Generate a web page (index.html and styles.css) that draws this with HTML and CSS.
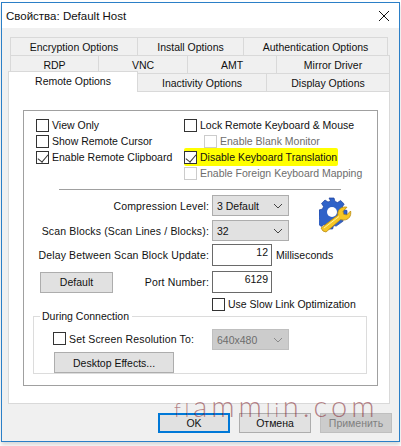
FILE: index.html
```html
<!DOCTYPE html>
<html lang="ru">

<head>
    <meta charset="UTF-8">
    <title>Свойства: Default Host</title>
    <link rel="stylesheet" href="styles.css">
</head>

<body>
    <div class="window">
        <div class="titlebar">
            <span>Свойства: Default Host</span>
            <svg class="close" width="12" height="12" viewBox="0 0 12 12">
                <path d="M1 1l10 10M11 1L1 11" stroke="#111" stroke-width="1" fill="none" />
            </svg>
        </div>

        <div class="content">
            <div class="tabrow row1">
                <div class="tab w128">Encryption Options</div>
                <div class="tab w106">Install Options</div>
                <div class="tab w144">Authentication Options</div>
            </div>
            <div class="tabrow row2">
                <div class="tab w88">RDP</div>
                <div class="tab w89">VNC</div>
                <div class="tab w88">AMT</div>
                <div class="tab w113">Mirror Driver</div>
            </div>
            <div class="tabrow row3">
                <div class="tab active">Remote Options</div>
                <div class="tab w129">Inactivity Options</div>
                <div class="tab w123">Display Options</div>
            </div>

            <div class="panel">
                <div class="main">
                    <div class="checks">
                        <div class="col left">
                            <label class="check"><i class="box"></i>View Only</label>
                            <label class="check"><i class="box"></i>Show Remote Cursor</label>
                            <label class="check"><i class="box on"></i>Enable Remote Clipboard</label>
                        </div>
                        <div class="col">
                            <label class="check"><i class="box"></i>Lock Remote Keyboard &amp; Mouse</label>
                            <label class="check off sub"><i class="box"></i>Enable Blank Monitor</label>
                            <label class="check marked"><i class="box on"></i>Disable Keyboard Translation</label>
                            <label class="check off"><i class="box"></i>Enable Foreign Keyboard Mapping</label>
                        </div>
                    </div>

                    <div class="sep"></div>

                    <div class="settings">
                        <div class="form">
                            <div class="line">
                                <span class="lbl">Compression Level:</span>
                                <div class="select">3 Default<svg class="chev" width="10" height="6" viewBox="0 0 10 6"><path d="M1 1l4 4 4-4" /></svg></div>
                            </div>
                            <div class="line gap4">
                                <span class="lbl">Scan Blocks (Scan Lines / Blocks):</span>
                                <div class="select">32<svg class="chev" width="10" height="6" viewBox="0 0 10 6"><path d="M1 1l4 4 4-4" /></svg></div>
                            </div>
                            <div class="line gap3">
                                <span class="lbl">Delay Between Scan Block Update:</span>
                                <div class="input">12</div>
                                <span class="unit">Milliseconds</span>
                            </div>
                            <div class="line gap5">
                                <div class="btn default">Default</div>
                                <span class="lbl">Port Number:</span>
                                <div class="input">6129</div>
                            </div>
                            <div class="line slow">
                                <label class="check"><i class="box"></i>Use Slow Link Optimization</label>
                            </div>
                        </div>

                        <svg class="gear" width="36" height="36" viewBox="0 0 36 36">
                            <path fill="#2f62c8" stroke="#1c3f9c" stroke-width=".7" d="M10 1h5l1 3.500 2.600 1 3-2 3.600 3.500-2 3 1 2.600 3.800.9v5l-3.800 1-1 2.600 1 2-7 5-2.600-.6-1 3.500h-5l-1-3.500-2.600-1-3 2-3.500-3.600 2-3-1-2.600L0 18v-5l3.500-1 1-2.600-2-3L6 3l3 2 2.600-1z" />
                            <circle cx="13" cy="15" r="5" fill="#fff" />
                            <path fill="#f6c625" stroke="#b98a10" stroke-width=".8" d="M4 34l-2-3 17-13c-1-4 2-8 7-8 1 0 2 .2 2 .2l-4 4 .6 3 3 .8 4-4c1 5-2 9-7 9-1 0-2 0-3-.4L7 35z" />
                            <path fill="none" stroke="#fff2a0" stroke-width="1" d="M5 31l15-11.500" />
                        </svg>
                    </div>

                    <fieldset class="during">
                        <legend>During Connection</legend>
                        <div class="line res-line">
                            <label class="check res"><i class="box"></i>Set Screen Resolution To:</label>
                            <div class="select dis">640x480<svg class="chev" width="10" height="6" viewBox="0 0 10 6"><path d="M1 1l4 4 4-4" /></svg></div>
                        </div>
                        <div class="btn effects">Desktop Effects...</div>
                    </fieldset>
                </div>
            </div>

            <div class="actions">
                <div class="btn act focus">OK</div>
                <div class="btn act">Отмена</div>
                <div class="btn act dis">Применить</div>
            </div>
        </div>

        <div class="watermark"><span class="short">fl</span>amm<span class="short">li</span>n.com</div>
    </div>
</body>

</html>
```

FILE: styles.css
```css
* {
    box-sizing: border-box;
}

body {
    margin: 0;
    height: 446px;
    overflow: hidden;
    background-color: #fff;
    font-family: "Liberation Sans", Arial, sans-serif;
    font-size: 10.5px;
    color: #111;
}

.window {
    position: relative;
    width: 399px;
    height: 440px;
    margin: 2px 0 0 1px;
    border: 1px solid #2b7fc7;
    background-color: #f0f0f0;
    box-shadow: 0 3px 4px #d8d8d8;
}

.titlebar {
    display: flex;
    justify-content: space-between;
    align-items: center;
    height: 25px;
    padding: 0 9px 0 4px;
    background-color: #fff;
    font-size: 11.5px;
}

.content {
    padding: 9px 8px 0 6px;
}

/* tabs */
.tabrow {
    display: flex;
    height: 18px;
    margin-left: 2px;
}

.row3 {
    margin-left: 0;
    align-items: flex-end;
    height: 18px;
}

.tab {
    display: flex;
    justify-content: center;
    align-items: center;
    height: 18px;
    border: 1px solid #d9d9d9;
    border-bottom: none;
    border-left: none;
    background-color: #f0f0f0;
    white-space: nowrap;
}

.tab:first-child {
    border-left: 1px solid #d9d9d9;
}

.w128 { width: 128px; }
.w106 { width: 106px; }
.w144 { width: 144px; }
.w88 { width: 89px; }
.w89 { width: 89px; }
.w113 { width: 113px; }
.w129 { width: 129px; }
.w123 { width: 123px; }

.tab.active {
    position: relative;
    z-index: 1;
    width: 130px;
    height: 21px;
    margin-bottom: -1px;
    padding-bottom: 3px;
    background-color: #fff;
}

.panel {
    width: 382px;
    height: 313px;
    padding: 18px 12px 0 14px;
    border: 1px solid #d9d9d9;
    background-color: #fff;
}

.main {
    width: 355px;
    height: 276px;
    padding: 6px 9px 0 9px;
    border: 1px solid #a0a0a0;
}

/* checkboxes */
.checks {
    display: flex;
    height: 66px;
    padding-left: 3px;
}

.col.left {
    flex: none;
    width: 148px;
}

.check {
    display: flex;
    align-items: center;
    height: 16px;
    white-space: nowrap;
}

.box {
    flex: none;
    display: block;
    position: relative;
    width: 13px;
    height: 13px;
    margin-right: 3px;
    border: 1px solid #333;
    background-color: #fff;
}

.box.on::after {
    content: "";
    position: absolute;
    left: 3px;
    top: 0;
    width: 5px;
    height: 9px;
    border: solid #333;
    border-width: 0 1px 1px 0;
    transform: rotate(40deg);
}

.check.off {
    color: #6d6d6d;
}

.check.off .box {
    border-color: #ccc;
}

.check.sub {
    margin-left: 20px;
}

.marked {
    width: 154px;
    height: 18px;
    margin: -1px 0;
    background-color: #ffff00;
    border-radius: 2px;
}

.sep {
    width: 282px;
    height: 1px;
    margin: 6px 0 5px 26px;
    background-color: #a0a0a0;
}

/* settings form */
.settings {
    position: relative;
}

.form {
    width: 345px;
}

.line {
    display: flex;
    align-items: center;
}

.gap4 { margin-top: 4px; }
.gap3 { margin-top: 3px; }
.gap5 { margin-top: 5px; }

.lbl {
    width: 179px;
    text-align: right;
    white-space: nowrap;
    padding-right: 3px;
    letter-spacing: .15px;
}

.gap5 .lbl {
    width: 99px;
}

.select {
    display: flex;
    justify-content: space-between;
    align-items: center;
    width: 77px;
    height: 21px;
    padding: 0 5px 0 4px;
    border: 1px solid #adadad;
    background-color: #e1e1e1;
}

.chev {
    fill: none;
    stroke: #444;
}

.select.dis {
    background-color: #cccccc;
    border-color: #bfbfbf;
    color: #6d6d6d;
}

.select.dis .chev {
    stroke: #8a8a8a;
}

.input {
    width: 60px;
    height: 22px;
    padding: 1px 3px 0 0;
    border: 1px solid #6a6a6a;
    background-color: #fff;
    text-align: right;
}

.unit {
    margin-left: 4px;
}

.btn {
    display: flex;
    justify-content: center;
    align-items: center;
    border: 1px solid #adadad;
    background-color: #e1e1e1;
}

.default {
    width: 73px;
    height: 21px;
    margin-left: 7px;
}

.slow {
    margin-top: 3px;
    padding-left: 179px;
}

.gear {
    position: absolute;
    left: 286px;
    top: 2px;
}

/* group box */
.during {
    position: relative;
    width: 334px;
    height: 65px;
    margin: -3px 0 0 0;
    padding: 0;
    border: 1px solid #dcdcdc;
}

.during legend {
    margin-left: 6px;
    padding: 0 3px 0 2px;
    line-height: 14px;
}

.res-line {
    margin-top: 6px;
    padding-left: 19px;
}

.res {
    width: 159px;
    margin-top: -2px;
    letter-spacing: .15px;
}

.effects {
    width: 120px;
    height: 21px;
    margin: 2px 0 0 20px;
}

/* bottom buttons */
.actions {
    display: flex;
    justify-content: flex-end;
    gap: 9px;
    margin: 9px -1px 0 0;
}

.act {
    width: 72px;
    height: 20px;
}

.act.focus {
    border: 2px solid #0078d7;
}

.act.dis {
    background-color: #cccccc;
    border-color: #bfbfbf;
    color: #808080;
}

.watermark {
    position: absolute;
    left: 172px;
    top: 388px;
    font-family: Lato, Inter, sans-serif;
    font-weight: 300;
    font-size: 29px;
    line-height: 30px;
    letter-spacing: 4px;
    color: rgba(130, 30, 45, .55);
    white-space: nowrap;
}

.short {
    font-size: 20px;
}
```
